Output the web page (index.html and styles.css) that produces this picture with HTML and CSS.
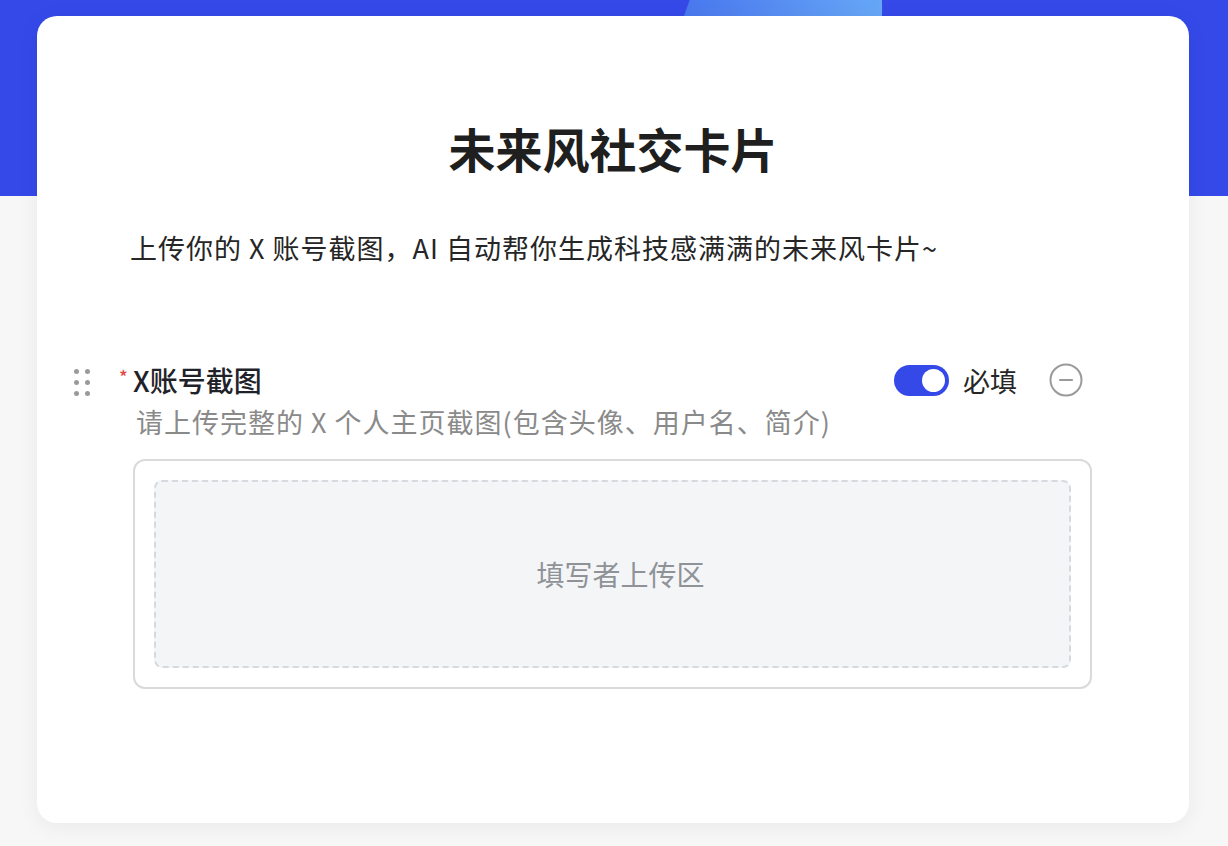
FILE: index.html
```html
<!DOCTYPE html>
<html lang="zh-CN">
<head>
  <meta charset="UTF-8" />
  <meta name="viewport" content="width=device-width, initial-scale=1.0"/>
  <title>未来风社交卡片</title>
  <link rel="stylesheet" href="styles.css">
</head>
<body>

  <div class="page">
    <div class="card">
      <h1 class="card-title">未来风社交卡片</h1>
      <p class="card-desc">上传你的 X 账号截图，AI 自动帮你生成科技感满满的未来风卡片~</p>

      <div class="field">
        <div class="drag-handle">
          <span></span><span></span>
          <span></span><span></span>
          <span></span><span></span>
        </div>
        <div class="field-body">
          <div class="field-head">
            <div class="field-label"><span class="required">*</span>X账号截图</div>
            <div class="field-actions">
              <span class="switch on"><span class="knob"></span></span>
              <span class="switch-text">必填</span>
              <svg class="remove-icon" width="34" height="34" viewBox="0 0 34 34">
                <circle cx="17" cy="17" r="15.5" fill="none" stroke="#9a9a9a" stroke-width="2"/>
                <line x1="11" y1="17" x2="23" y2="17" stroke="#9a9a9a" stroke-width="2.2" stroke-linecap="round"/>
              </svg>
            </div>
          </div>
          <div class="field-hint">请上传完整的 X 个人主页截图(包含头像、用户名、简介)</div>
          <div class="upload-box">
            <div class="upload-area">填写者上传区</div>
          </div>
        </div>
      </div>
    </div>
  </div>

</body>
</html>
```

FILE: styles.css
```css
html, body {
  margin: 0;
  padding: 0;
  height: 100%;
  overflow: hidden;
}

body {
  background: linear-gradient(to bottom, #3449e8 0, #3449e8 196px, #f7f7f8 196px);
  font-family: "Noto Sans CJK SC", "Noto Sans", sans-serif;
  position: relative;
}

/* light blue blob peeking above the card */
body::before {
  content: "";
  position: absolute;
  left: 680px;
  top: -106px;
  width: 196px;
  height: 300px;
  border-radius: 50%;
  background: linear-gradient(to right, #4a78ee, #68aaf7);
  transform: rotate(18deg);
}

.page {
  position: relative;
  padding: 16px 39px 0 37px;
}

.card {
  height: 807px;
  box-sizing: border-box;
  background: #fff;
  border-radius: 20px;
  box-shadow: 0 4px 22px rgba(0, 0, 0, 0.06);
  padding-top: 99px;
}

.card-title {
  margin: 0;
  text-align: center;
  font-size: 47px;
  line-height: 66px;
  font-weight: 700;
  color: #1f1f1f;
}

.card-desc {
  margin: 47px 0 0;
  padding-left: 93px;
  font-size: 27px;
  line-height: 40px;
  letter-spacing: 1px;
  color: #262626;
}

.field {
  display: grid;
  grid-template-columns: 45px 1fr;
  margin-top: 92px;
  padding: 0 97px 0 37px;
}

.drag-handle {
  display: grid;
  grid-template-columns: 5px 5px;
  column-gap: 6px;
  row-gap: 6px;
  align-self: start;
  margin-top: 9px;
}

.drag-handle span {
  width: 5px;
  height: 5px;
  border-radius: 50%;
  background: #9a9a9a;
}

.field-head {
  display: flex;
  align-items: center;
  justify-content: space-between;
  height: 40px;
}

.field-label {
  font-size: 28px;
  font-weight: 500;
  color: #1f2329;
  display: flex;
  align-items: center;
}

.required {
  color: #e54545;
  font-size: 18px;
  width: 14px;
  margin-top: -8px;
}

.field-actions {
  display: flex;
  align-items: center;
  margin-right: 9px;
}

.switch {
  width: 55px;
  height: 31px;
  border-radius: 16px;
  background: #3449e8;
  position: relative;
}

.switch .knob {
  position: absolute;
  top: 4px;
  right: 4px;
  width: 23px;
  height: 23px;
  border-radius: 50%;
  background: #fff;
}

.switch-text {
  font-size: 27px;
  color: #262626;
  margin-left: 14px;
}

.remove-icon {
  margin-left: 32px;
}

.field-hint {
  margin-top: 2px;
  padding-left: 17px;
  font-size: 27px;
  line-height: 40px;
  letter-spacing: 1px;
  color: #8a8a8a;
}

.upload-box {
  margin: 17px 0 0 14px;
  height: 230px;
  box-sizing: border-box;
  border: 2px solid #dadada;
  border-radius: 12px;
  padding: 19px;
}

.upload-area {
  height: 100%;
  box-sizing: border-box;
  padding-left: 16px;
  border: 2px dashed #d6d9de;
  border-radius: 8px;
  background: #f3f5f7;
  display: flex;
  align-items: center;
  justify-content: center;
  font-size: 28px;
  color: #8f9297;
}
```
